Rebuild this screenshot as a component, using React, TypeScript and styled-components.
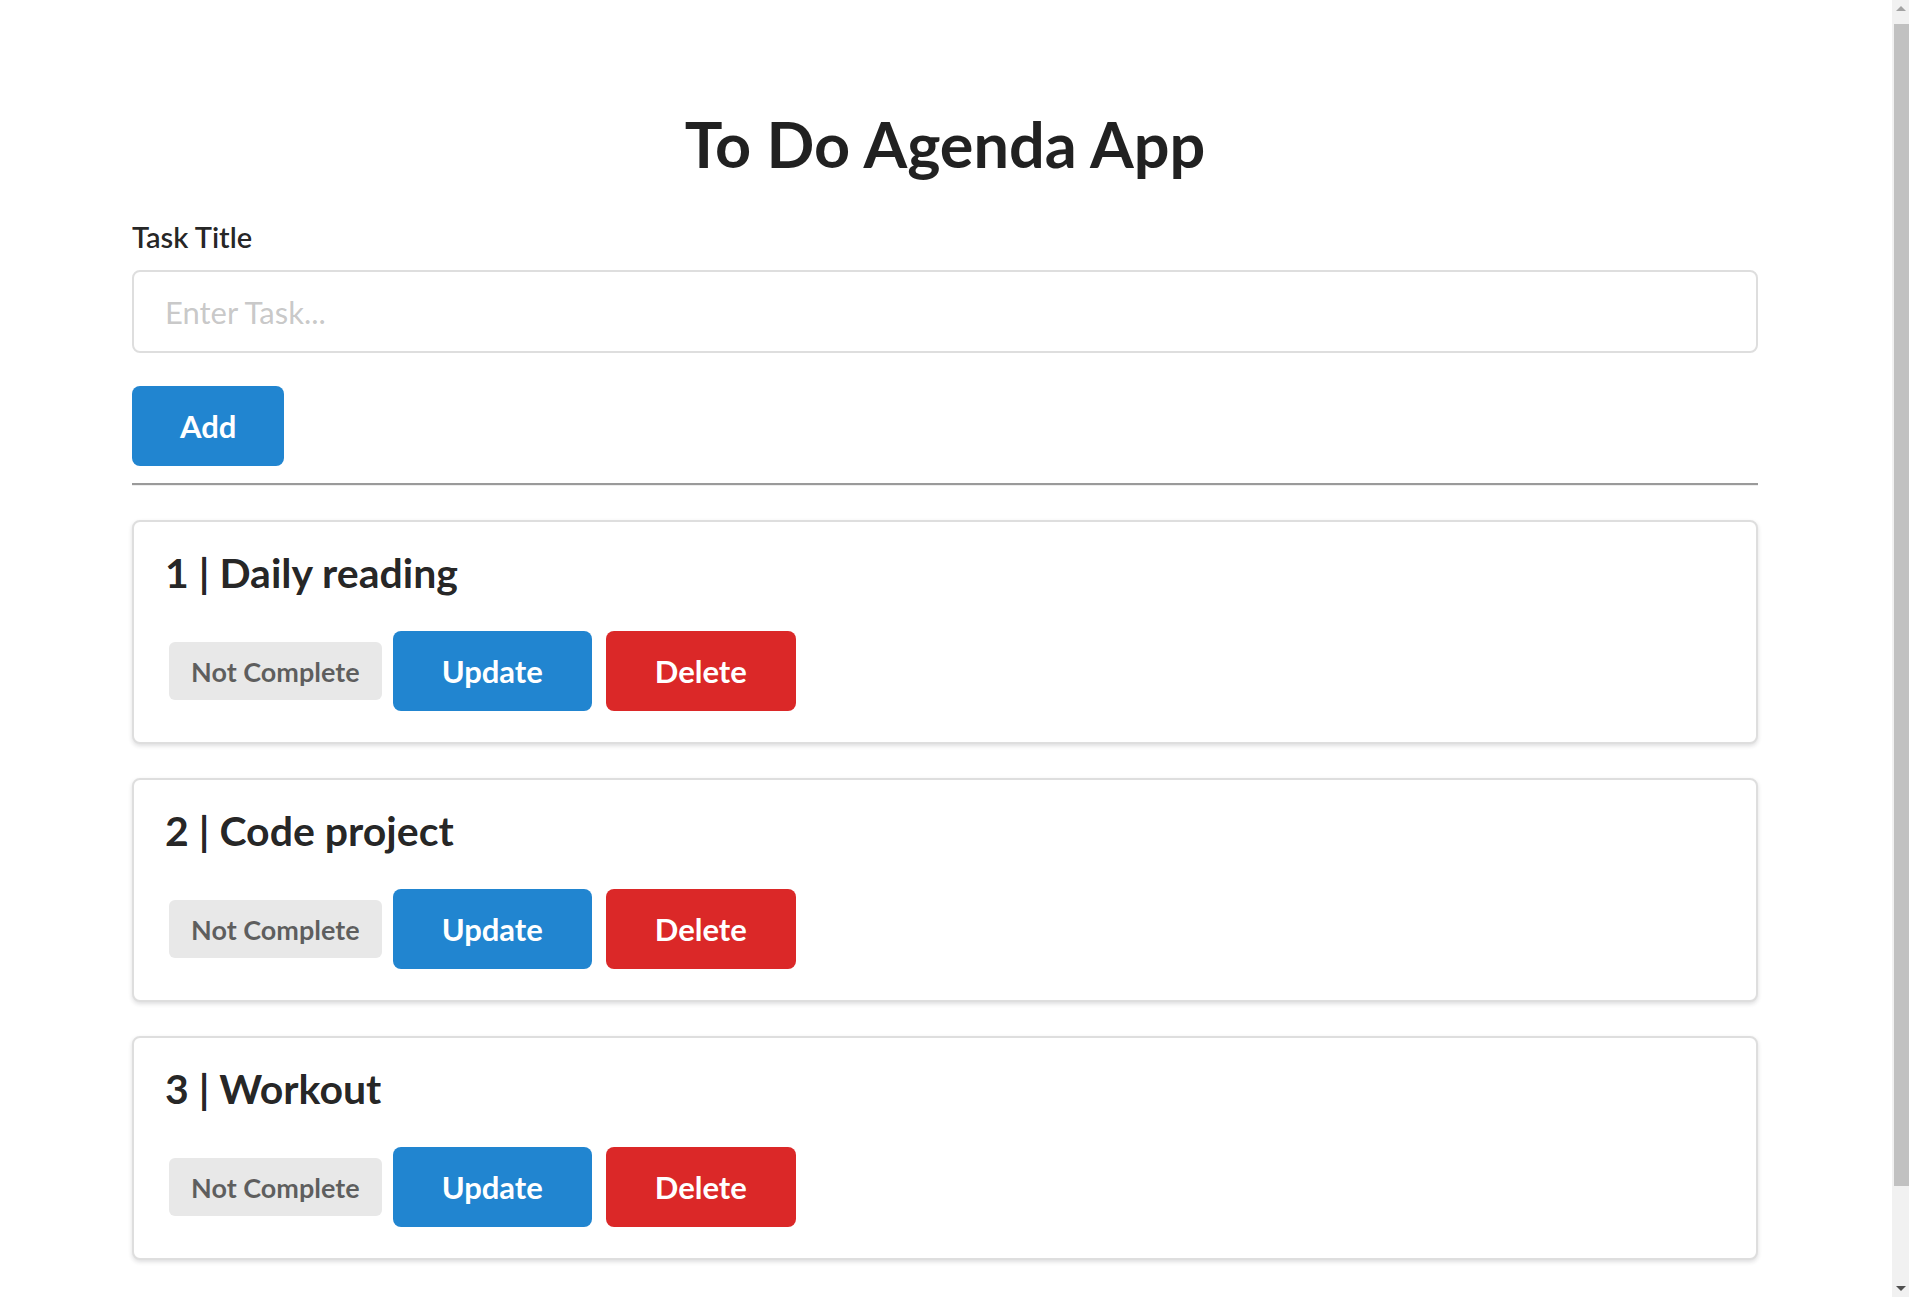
import React from "react";
import styled, { createGlobalStyle } from "styled-components";

const GlobalStyle = createGlobalStyle`
  html, body {
    margin: 0;
    padding: 0;
    background: #ffffff;
  }
  body {
    font-family: Lato, "Helvetica Neue", Arial, sans-serif;
    color: rgba(0, 0, 0, 0.87);
  }
  * { box-sizing: border-box; }
`;

const Viewport = styled.div`
  padding-right: 19px;
`;

const Page = styled.main`
  width: 1626px;
  margin: 0 auto;
  padding: 112px 0 152px;
  display: flex;
  flex-direction: column;
`;

const Title = styled.h1`
  margin: 0;
  font-family: Lato, sans-serif;
  font-size: 63px;
  line-height: 63px;
  font-weight: 700;
  text-align: center;
  color: rgba(0, 0, 0, 0.87);
`;

const Form = styled.form`
  display: flex;
  flex-direction: column;
  align-items: flex-start;
  margin-top: 47px;
`;

const Label = styled.label`
  font-family: Lato, sans-serif;
  font-size: 29px;
  line-height: 29px;
  font-weight: 600;
  color: rgba(0, 0, 0, 0.87);
`;

const TextInput = styled.input`
  margin-top: 19px;
  width: 100%;
  height: 83px;
  padding: 0 31px;
  border: 2px solid #dedede;
  border-radius: 8px;
  font-family: Lato, sans-serif;
  font-size: 31px;
  color: rgba(0, 0, 0, 0.87);
  outline: none;
  background: #fff;
  &::placeholder {
    color: rgba(191, 191, 191, 0.87);
  }
`;

const Button = styled.button<{ $tone: "blue" | "red" }>`
  height: 80px;
  padding: 0 49px;
  border: none;
  border-radius: 8px;
  background: ${(p) => (p.$tone === "blue" ? "#2185d0" : "#db2828")};
  color: #ffffff;
  font-family: Lato, sans-serif;
  font-size: 31px;
  line-height: 1;
  font-weight: 700;
  cursor: pointer;
  white-space: nowrap;
`;

const AddButton = styled(Button)`
  margin-top: 33px;
  padding: 0 48px;
`;

const Divider = styled.hr`
  width: 100%;
  margin: 17px 0 0;
  border: none;
  border-top: 2px solid #9a9a9a;
  border-bottom: 1px solid #eeeeee;
`;

const List = styled.section`
  display: flex;
  flex-direction: column;
  gap: 34px;
  margin-top: 34px;
`;

const Card = styled.article`
  border: 2px solid #dedede;
  border-radius: 8px;
  box-shadow: 0 2px 4px 0 rgba(34, 36, 38, 0.15);
  padding: 30px 31px 31px;
  background: #fff;
`;

const CardTitle = styled.h3`
  margin: 0;
  font-family: Lato, sans-serif;
  font-size: 41px;
  line-height: 41px;
  font-weight: 700;
  color: rgba(0, 0, 0, 0.87);
`;

const Actions = styled.div`
  display: flex;
  align-items: center;
  margin-top: 38px;
`;

const Status = styled.span`
  display: inline-flex;
  align-items: center;
  height: 58px;
  margin: 0 11px 0 4px;
  padding: 0 22px;
  border-radius: 6px;
  background: #e8e8e8;
  color: rgba(0, 0, 0, 0.6);
  font-family: Lato, sans-serif;
  font-size: 27px;
  font-weight: 700;
  white-space: nowrap;
`;

const DeleteButton = styled(Button)`
  margin-left: 14px;
`;

const ScrollTrack = styled.div`
  position: fixed;
  top: 0;
  right: 0;
  width: 17px;
  height: 100vh;
  background: #f1f1f1;
  display: flex;
  flex-direction: column;
  align-items: center;
`;

const Arrow = styled.div<{ $dir: "up" | "down" }>`
  height: 17px;
  width: 100%;
  display: flex;
  align-items: center;
  justify-content: center;
  &::after {
    content: "";
    border-left: 5px solid transparent;
    border-right: 5px solid transparent;
    ${(p) =>
      p.$dir === "up"
        ? "border-bottom: 5px solid #a3a3a3;"
        : "border-top: 5px solid #505050;"}
  }
`;

const ScrollThumbArea = styled.div`
  flex: 1;
  width: 100%;
  padding: 7px 0 94px 2px;
  display: flex;
`;

const ScrollThumb = styled.div`
  flex: 1;
  background: #c1c1c1;
`;

const tasks = [
  { id: 1, title: "Daily reading" },
  { id: 2, title: "Code project" },
  { id: 3, title: "Workout" },
];

export default function App() {
  return (
    <>
      <GlobalStyle />
      <Viewport>
        <Page>
          <Title>To Do Agenda App</Title>
          <Form onSubmit={(e) => e.preventDefault()}>
            <Label htmlFor="task">Task Title</Label>
            <TextInput id="task" placeholder="Enter Task..." />
            <AddButton type="submit" $tone="blue">
              Add
            </AddButton>
          </Form>
          <Divider />
          <List>
            {tasks.map((t) => (
              <Card key={t.id}>
                <CardTitle>
                  {t.id} | {t.title}
                </CardTitle>
                <Actions>
                  <Status>Not Complete</Status>
                  <Button $tone="blue">Update</Button>
                  <DeleteButton $tone="red">Delete</DeleteButton>
                </Actions>
              </Card>
            ))}
          </List>
        </Page>
      </Viewport>
      <ScrollTrack aria-hidden="true">
        <Arrow $dir="up" />
        <ScrollThumbArea>
          <ScrollThumb />
        </ScrollThumbArea>
        <Arrow $dir="down" />
      </ScrollTrack>
    </>
  );
}
